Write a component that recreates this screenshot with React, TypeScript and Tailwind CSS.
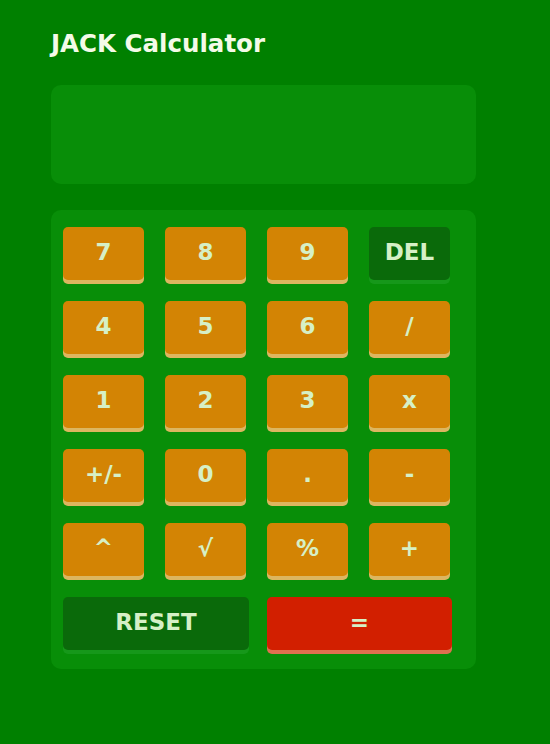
const keys: { label: string; kind: "num" | "dark" }[] = [
  { label: "7", kind: "num" },
  { label: "8", kind: "num" },
  { label: "9", kind: "num" },
  { label: "DEL", kind: "dark" },
  { label: "4", kind: "num" },
  { label: "5", kind: "num" },
  { label: "6", kind: "num" },
  { label: "/", kind: "num" },
  { label: "1", kind: "num" },
  { label: "2", kind: "num" },
  { label: "3", kind: "num" },
  { label: "x", kind: "num" },
  { label: "+/-", kind: "num" },
  { label: "0", kind: "num" },
  { label: ".", kind: "num" },
  { label: "-", kind: "num" },
  { label: "^", kind: "num" },
  { label: "√", kind: "num" },
  { label: "%", kind: "num" },
  { label: "+", kind: "num" },
];

export default function App() {
  return (
    <main
      className="min-h-screen bg-[#008000] px-[51px] pt-[29px]"
      style={{ fontFamily: '"DejaVu Sans", sans-serif' }}
    >
      <h1 className="text-[24.5px] font-bold leading-[30px] text-[#f4fbe8]">
        JACK Calculator
      </h1>

      {/* Display */}
      <div className="mt-[26px] h-[99px] w-[425px] rounded-[10px] bg-[#088e08]" />

      {/* Keypad */}
      <div className="mt-[26px] w-[425px] rounded-[10px] bg-[#088e08] pl-[12px] pt-[17px] pb-[19px]">
        <div className="grid grid-cols-[repeat(4,81px)] gap-x-[21px] gap-y-[21px]">
          {keys.map((k) => (
            <button
              key={k.label}
              className={`h-[53px] rounded-[5px] pb-[3px] text-[23px] font-bold text-[#d6f0c6] ${
                k.kind === "num"
                  ? "bg-[#d38404] shadow-[0_4px_0_#dcb660]"
                  : "bg-[#0a6a0a] shadow-[0_4px_0_#16981a]"
              }`}
            >
              {k.label}
            </button>
          ))}
          <button className="col-span-2 h-[53px] w-[186px] rounded-[5px] pb-[3px] bg-[#0a6a0a] text-[23px] font-bold text-[#d6f0c6] shadow-[0_4px_0_#16981a]">
            RESET
          </button>
          <button className="col-span-2 h-[53px] w-[185px] rounded-[5px] pb-[3px] bg-[#d21f00] text-[23px] font-bold text-[#d6f0c6] shadow-[0_4px_0_#e07050]">
            =
          </button>
        </div>
      </div>
    </main>
  );
}
